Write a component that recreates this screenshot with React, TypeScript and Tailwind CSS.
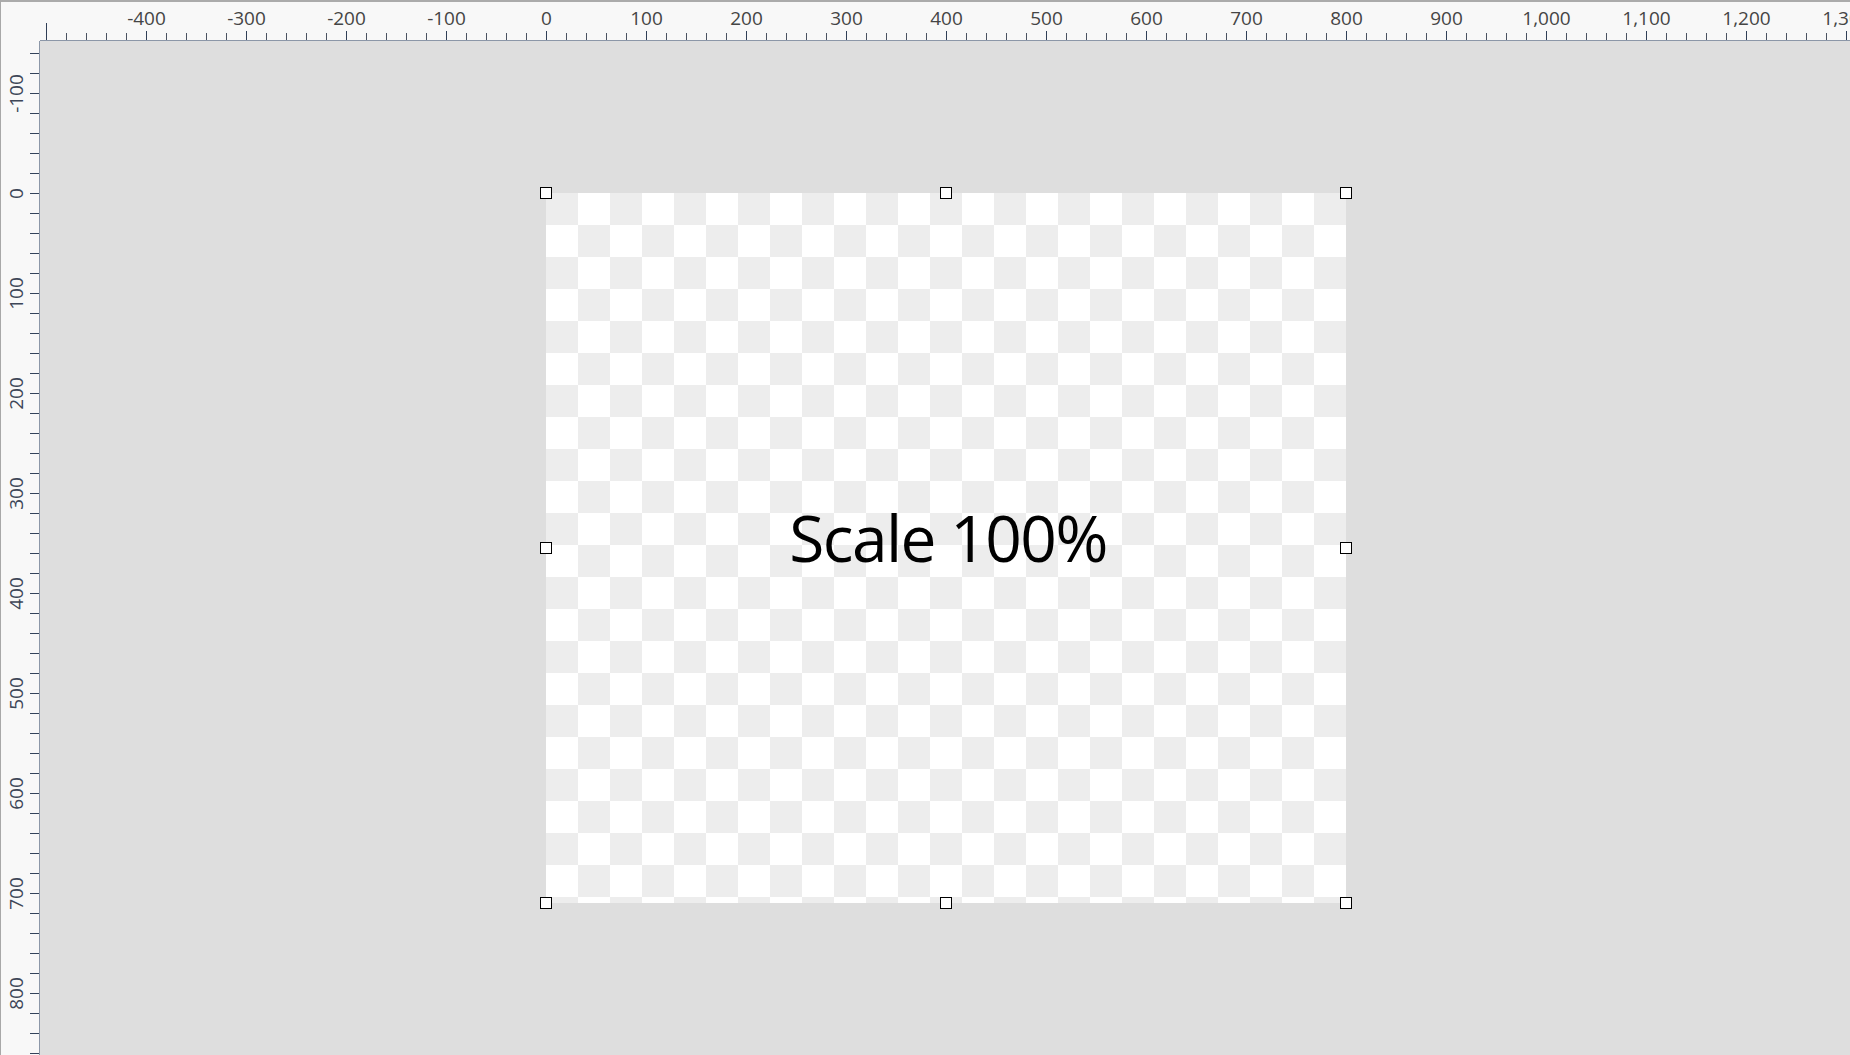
const ORIGIN_X = 546;
const ORIGIN_Y = 193;

const fmt = (n: number) => n.toLocaleString("en-US");

function TopRuler() {
  const ticks = [];
  for (let k = -25; k <= 65; k++) {
    const x = ORIGIN_X + 20 * k + 0.5;
    const major = k % 5 === 0;
    const y1 = k === -25 ? 23 : major ? 31 : 33;
    ticks.push(
      <line
        key={k}
        x1={x}
        x2={x}
        y1={y1}
        y2={40}
        stroke={major ? "#2f3e56" : "#4a5261"}
        strokeWidth={1}
      />
    );
  }
  const labels = [];
  for (let v = -400; v <= 1300; v += 100) {
    labels.push(
      <text key={v} x={ORIGIN_X + v + 0.5} y={25} textAnchor="middle">
        {fmt(v)}
      </text>
    );
  }
  return (
    <svg viewBox="40 2 1810 38" width={1810} height={38} className="block">
      <g fill="#454545" fontSize={19} fontFamily="'Open Sans', sans-serif">
        {labels}
      </g>
      {ticks}
    </svg>
  );
}

function LeftRuler() {
  const ticks = [];
  for (let k = -7; k <= 43; k++) {
    const y = ORIGIN_Y + 20 * k + 0.5;
    ticks.push(
      <line key={k} x1={30} x2={39} y1={y} y2={y} stroke="#34435a" strokeWidth={1} />
    );
  }
  const labels = [];
  for (let v = -100; v <= 800; v += 100) {
    labels.push(
      <text
        key={v}
        transform={`translate(23 ${ORIGIN_Y + v + 0.5}) rotate(-90)`}
        textAnchor="middle"
      >
        {fmt(v)}
      </text>
    );
  }
  return (
    <svg viewBox="1 41 38 1014" width={38} height={1014} className="block">
      <g fill="#3d4657" fontSize={19} fontFamily="'Open Sans', sans-serif">
        {labels}
      </g>
      {ticks}
    </svg>
  );
}

function Handle({ className }: { className: string }) {
  return (
    <div
      className={`absolute w-[12px] h-[12px] border-[1.5px] border-black bg-white ${className}`}
    />
  );
}

export default function App() {
  return (
    <div className="w-[1850px] h-[1055px] overflow-hidden flex flex-col bg-[#dedede] font-['Open_Sans',sans-serif]">
      <div className="flex h-[41px] shrink-0">
        <div className="w-[40px] bg-[#f8f8f8] border-t-2 border-l border-t-[#ababab] border-l-[#a8a8a8]" />
        <div className="flex-1 bg-[#f8f8f8] border-t-2 border-b border-t-[#ababab] border-b-[#8c97a8]">
          <TopRuler />
        </div>
      </div>
      <div className="flex flex-1 min-h-0">
        <div className="w-[40px] shrink-0 bg-[#f8f8f8] border-l border-r border-l-[#a8a8a8] border-r-[#8c97a8]">
          <LeftRuler />
        </div>
        <div className="flex-1 pl-[506px] pt-[152px]">
          <div className="relative w-[800px] h-[710px] bg-[image:conic-gradient(#fff_25%,#ededed_0_50%,#fff_0_75%,#ededed_0)] bg-[length:64px_64px] flex items-center justify-center pb-[20px] pl-[4px]">
            <span className="text-[64px] leading-none tracking-[-1.5px] text-black">
              Scale 100%
            </span>
            <Handle className="-left-[6px] -top-[6px]" />
            <Handle className="left-[394px] -top-[6px]" />
            <Handle className="-right-[6px] -top-[6px]" />
            <Handle className="-left-[6px] top-[349px]" />
            <Handle className="-right-[6px] top-[349px]" />
            <Handle className="-left-[6px] -bottom-[6px]" />
            <Handle className="left-[394px] -bottom-[6px]" />
            <Handle className="-right-[6px] -bottom-[6px]" />
          </div>
        </div>
      </div>
    </div>
  );
}
